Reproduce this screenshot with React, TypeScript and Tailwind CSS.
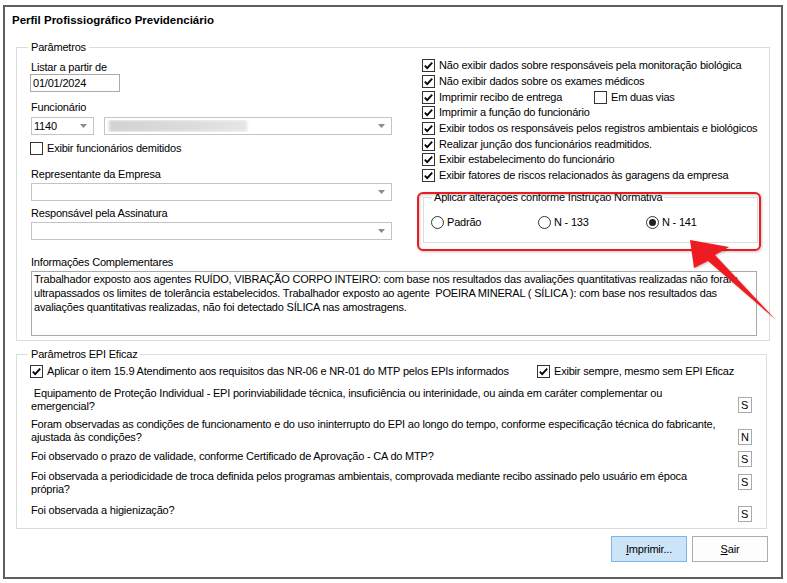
import React from 'react';

// caixa de seleção estilo Windows 10
function Check({ on = false }: { on?: boolean }) {
  return (
    <span className="flex h-[13px] w-[13px] shrink-0 items-center justify-center border border-[#333333] bg-white">
      {on && (
        <svg width="11" height="11" viewBox="0 0 11 11">
          <path d="M1.8 5.6 L4.2 8.1 L9.2 2.6" fill="none" stroke="#000" strokeWidth="1.8" />
        </svg>
      )}
    </span>
  );
}

function Radio({ on = false }: { on?: boolean }) {
  return (
    <span className="flex h-[13px] w-[13px] shrink-0 items-center justify-center rounded-full border border-[#333333] bg-white">
      {on && <span className="h-[7px] w-[7px] rounded-full bg-[#222]" />}
    </span>
  );
}

function CheckRow({ on, label, className = '' }: { on?: boolean; label: string; className?: string }) {
  return (
    <div className={`flex items-center gap-[4px] leading-[13px] ${className}`}>
      <Check on={on} />
      <span className="whitespace-nowrap">{label}</span>
    </div>
  );
}

function Combo({ w, value, children }: { w: string; value?: string; children?: React.ReactNode }) {
  return (
    <div className={`flex h-[18px] items-center border border-[#c4c4c4] bg-white pl-[2px] ${w}`}>
      <div className="flex-1 overflow-hidden whitespace-nowrap">{value ?? children}</div>
      <svg width="7" height="4" viewBox="0 0 7 4" className="mr-[6px] shrink-0">
        <polygon points="0,0 7,0 3.5,4" fill="#8a8a8a" />
      </svg>
    </div>
  );
}

function Label({ children, className = '' }: { children: React.ReactNode; className?: string }) {
  return <div className={`h-[13px] whitespace-nowrap leading-[13px] ${className}`}>{children}</div>;
}

function Answer({ v, className = '' }: { v: string; className?: string }) {
  return (
    <div className={`h-[16px] w-[14px] shrink-0 border border-[#a9a9a9] bg-white pl-[2px] leading-[14px] ${className}`}>
      {v}
    </div>
  );
}

const perguntas = [
  {
    text: [
      ' Equipamento de Proteção Individual - EPI porinviabilidade técnica, insuficiência ou interinidade, ou ainda em caráter complementar ou',
      'emergencial?',
    ],
    v: 'S',
    h: 'h-[31px]',
    box: 'mt-[10px]',
  },
  {
    text: [
      'Foram observadas as condições de funcionamento e do uso ininterrupto do EPI ao longo do tempo, conforme especificação técnica do fabricante,',
      'ajustada às condições?',
    ],
    v: 'N',
    h: 'h-[32px]',
    box: 'mt-[11px]',
  },
  {
    text: ['Foi observado o prazo de validade, conforme Certificado de Aprovação - CA do MTP?'],
    v: 'S',
    h: 'h-[20px]',
    box: 'mt-[1px]',
  },
  {
    text: [
      'Foi observada a periodicidade de troca definida pelos programas ambientais, comprovada mediante recibo assinado pelo usuário em época',
      'própria?',
    ],
    v: 'S',
    h: 'h-[34px]',
    box: 'mt-[4px]',
  },
  {
    text: ['Foi observada a higienização?'],
    v: 'S',
    h: 'h-[20px]',
    box: 'mt-[2px]',
  },
];

export default function App() {
  return (
    <div className="relative h-[583px] w-[787px] overflow-hidden bg-white font-['Liberation_Sans',Arial,sans-serif] text-[11px] tracking-[-0.2px] text-black">
      <div className="ml-[3px] mt-[5px] h-[574px] w-[780px] border-2 border-[#5f5f5f]">
        <div className="pl-[7px] pt-[6px] text-[11.5px] font-bold leading-[14px] tracking-[0px]">
          Perfil Profissiográfico Previdenciário
        </div>

        {/* Parâmetros */}
        <fieldset className="ml-[11px] mt-[13.5px] h-[300px] w-[751px] border border-[#dcdcdc] px-[11px]">
          <legend className="px-[3px] leading-[13px]">Parâmetros</legend>
          <div className="flex pl-[3px]">
            <div className="w-[362px] pt-[7.5px]">
              <Label>Listar a partir de</Label>
              <div className="-ml-[1px] h-[18px] w-[90px] border border-[#a9a9a9] pl-[2px] leading-[16px]">01/01/2024</div>
              <Label className="mt-[9px]">Funcionário</Label>
              <div className="mt-[3px] flex gap-[10px]">
                <Combo w="w-[63px]" value="1140" />
                <Combo w="w-[288px]">
                  <div className="ml-[2px] h-[12px] w-[138px] bg-gradient-to-r from-[#d2d2d2] via-[#dadada] to-[#e6e6e6] blur-[1.5px]" />
                </Combo>
              </div>
              <CheckRow className="mt-[7px] -ml-[1px]" label="Exibir funcionários demitidos" />
              <Label className="mt-[13px]">Representante da Empresa</Label>
              <Combo w="w-[361px] mt-[2px]" value="" />
              <Label className="mt-[6px]">Responsável pela Assinatura</Label>
              <Combo w="w-[361px] mt-[2px]" value="" />
            </div>

            <div className="ml-[29px] pt-[4.5px]">
              <div className="flex flex-col">
                <CheckRow on className="h-[15.7px]" label="Não exibir dados sobre responsáveis pela monitoração biológica" />
                <CheckRow on className="h-[15.7px]" label="Não exibir dados sobre os exames médicos" />
                <div className="flex h-[15.7px] items-center">
                  <CheckRow on className="w-[172px]" label="Imprimir recibo de entrega" />
                  <CheckRow label="Em duas vias" />
                </div>
                <CheckRow on className="h-[15.7px]" label="Imprimir a função do funcionário" />
                <CheckRow on className="h-[15.7px]" label="Exibir todos os responsáveis pelos registros ambientais e biológicos" />
                <CheckRow on className="h-[15.7px]" label="Realizar junção dos funcionários readmitidos." />
                <CheckRow on className="h-[15.7px]" label="Exibir estabelecimento do funcionário" />
                <CheckRow on className="h-[15.7px]" label="Exibir fatores de riscos relacionados às garagens da empresa" />
              </div>

              <fieldset className="ml-[1px] mt-[7.9px] h-[52px] w-[335px] border border-[#dcdcdc] px-[8px]">
                <legend className="px-[2px] leading-[13px]">Aplicar alterações conforme Instrução Normativa</legend>
                <div className="-ml-[1px] flex pt-[12px] leading-[13px]">
                  <div className="flex w-[107px] items-center gap-[3px]">
                    <Radio />
                    <span>Padrão</span>
                  </div>
                  <div className="flex w-[108px] items-center gap-[3px]">
                    <Radio />
                    <span>N - 133</span>
                  </div>
                  <div className="flex items-center gap-[3px]">
                    <Radio on />
                    <span>N - 141</span>
                  </div>
                </div>
              </fieldset>
            </div>
          </div>

          <div className="pl-[3px]">
            <Label className="mt-[12.5px]">Informações Complementares</Label>
            <div className="mt-[2px] h-[65px] w-[726px] overflow-hidden whitespace-pre border border-[#a9a9a9] pl-[2px] leading-[14px]">
              {'Trabalhador exposto aos agentes RUÍDO, VIBRAÇÃO CORPO INTEIRO: com base nos resultados das avaliações quantitativas realizadas não foram\n'}
              {'ultrapassados os limites de tolerância estabelecidos. Trabalhador exposto ao agente  POEIRA MINERAL ( SÍLICA ): com base nos resultados das\n'}
              {'avaliações quantitativas realizadas, não foi detectado SÍLICA nas amostragens.'}
            </div>
          </div>
        </fieldset>

        {/* Parâmetros EPI Eficaz */}
        <fieldset className="ml-[11px] mt-[7px] h-[181px] w-[751px] border border-[#dcdcdc] px-[11px]">
          <legend className="px-[3px] leading-[13px]">Parâmetros EPI Eficaz</legend>
          <div className="pl-[3px] pt-[4px]">
            <div className="flex h-[13px] items-center">
              <CheckRow on className="-ml-[1px] w-[507px]" label="Aplicar o item 15.9 Atendimento aos requisitos das NR-06 e NR-01 do MTP pelos EPIs informados" />
              <CheckRow on label="Exibir sempre, mesmo sem EPI Eficaz" />
            </div>
            <div className="mt-[9px] w-[721px]">
              {perguntas.map((p, i) => (
                <div key={i} className={`flex justify-between ${p.h}`}>
                  <div className="whitespace-pre leading-[13.5px]">
                    {p.text.map((t, j) => (
                      <div key={j}>{t}</div>
                    ))}
                  </div>
                  <Answer v={p.v} className={p.box} />
                </div>
              ))}
            </div>
          </div>
        </fieldset>

        <div className="mt-[7.5px] flex justify-end gap-[5px] pr-[13px]">
          <button className="h-[26px] w-[76px] border border-[#7eb4ea] bg-[#cce4f7] text-center">
            <span className="underline underline-offset-[1px]">I</span>mprimir...
          </button>
          <button className="h-[26px] w-[76px] border border-[#adadad] bg-[#fdfdfd] text-center">
            <span className="underline underline-offset-[1px]">S</span>air
          </button>
        </div>
      </div>

      {/* destaque em vermelho e seta */}
      <svg className="pointer-events-none absolute left-0 top-0" width="787" height="583" viewBox="0 0 787 583">
        <defs>
          <filter id="sh" x="-20%" y="-20%" width="140%" height="140%">
            <feDropShadow dx="1" dy="1" stdDeviation="1" floodColor="#000" floodOpacity="0.25" />
          </filter>
        </defs>
        <rect x="418" y="193" width="342" height="57" rx="5" fill="none" stroke="#ea1b23" strokeWidth="2" filter="url(#sh)" />
        <polygon
          points="690,240 729,247 715,255 775,319 708,261 694,268"
          fill="#ee1c24"
          filter="url(#sh)"
        />
      </svg>
    </div>
  );
}
